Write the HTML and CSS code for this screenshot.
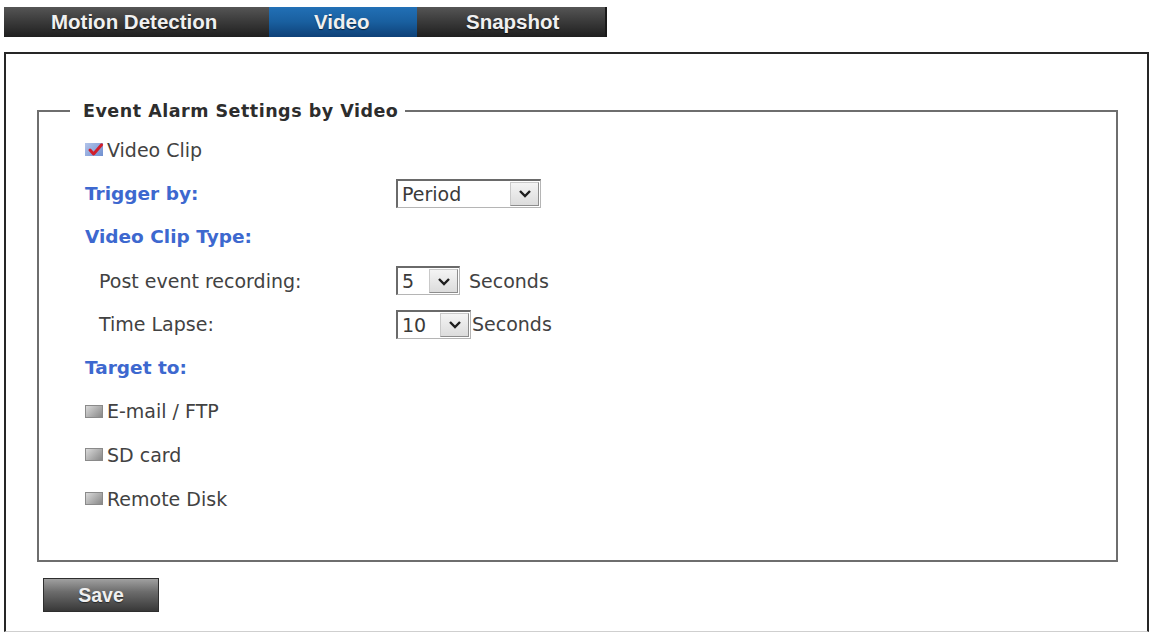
FILE: index.html
```html
<!DOCTYPE html>
<html lang="en">
<head>
<meta charset="utf-8">
<title>Event Alarm Settings</title>
<link rel="stylesheet" href="styles.css">
</head>
<body>
  <nav class="tabs">
    <a class="tab tab-motion">Motion Detection</a>
    <a class="tab tab-video is-active">Video</a>
    <a class="tab tab-snapshot">Snapshot</a>
  </nav>

  <main class="panel">
    <fieldset class="group">
      <legend class="group-title">Event Alarm Settings by Video</legend>

      <div class="row">
        <label class="check"><span class="box box-on"><svg viewBox="0 0 18 13" width="18" height="13"><path d="M5 7 L8.6 11 L16.6 1.8" fill="none" stroke="#d11f2c" stroke-width="3" stroke-linecap="round" stroke-linejoin="round"/></svg></span>Video Clip</label>
      </div>

      <div class="row">
        <span class="label label-blue">Trigger by:</span>
        <span class="select select-wide"><span class="select-value">Period</span><span class="select-btn"><svg viewBox="0 0 14 9" width="14" height="9"><path d="M2 2 L7 7 L12 2" fill="none" stroke="#1e1e1e" stroke-width="2.4"/></svg></span></span>
      </div>

      <div class="row">
        <span class="label label-blue">Video Clip Type:</span>
      </div>

      <div class="row">
        <span class="label label-sub">Post event recording:</span>
        <span class="select select-short"><span class="select-value">5</span><span class="select-btn"><svg viewBox="0 0 14 9" width="14" height="9"><path d="M2 2 L7 7 L12 2" fill="none" stroke="#1e1e1e" stroke-width="2.4"/></svg></span></span>
        <span class="unit">Seconds</span>
      </div>

      <div class="row">
        <span class="label label-sub">Time Lapse:</span>
        <span class="select select-mid"><span class="select-value">10</span><span class="select-btn"><svg viewBox="0 0 14 9" width="14" height="9"><path d="M2 2 L7 7 L12 2" fill="none" stroke="#1e1e1e" stroke-width="2.4"/></svg></span></span>
        <span class="unit unit-tight">Seconds</span>
      </div>

      <div class="row">
        <span class="label label-blue">Target to:</span>
      </div>

      <div class="row">
        <label class="check"><span class="box box-off"></span>E-mail / FTP</label>
      </div>

      <div class="row">
        <label class="check"><span class="box box-off"></span>SD card</label>
      </div>

      <div class="row">
        <label class="check"><span class="box box-off"></span>Remote Disk</label>
      </div>
    </fieldset>

    <button class="btn-save" type="button">Save</button>
  </main>
</body>
</html>
```

FILE: styles.css
```css
html, body {
  margin: 0;
  padding: 0;
  background: #fff;
}

body {
  font-family: "DejaVu Sans", Verdana, sans-serif;
  color: #424242;
}

/* ---- top tab strip ---- */
.tabs {
  display: flex;
  margin: 7px 0 0 4px;
  width: 603px;
  height: 30px;
}

.tab {
  display: flex;
  align-items: center;
  height: 30px;
  font-family: "Liberation Sans", Arial, sans-serif;
  font-weight: bold;
  font-size: 20.5px;
  color: #f0f0f0;
  text-shadow: 0 1px 1px rgba(0, 0, 0, 0.6);
  background: linear-gradient(#555 0%, #3c3c3c 45%, #1f1f1f 100%);
  box-sizing: border-box;
  cursor: pointer;
}

.tab-motion {
  width: 265px;
  padding-left: 47px;
}

.tab-video {
  width: 148px;
  padding-left: 45px;
}

.tab-snapshot {
  width: 190px;
  padding-left: 49px;
  box-shadow: inset -2px 0 0 #1a1a1a;
}

.tab.is-active {
  background: linear-gradient(#2270b6 0%, #195f9f 50%, #0e4178 100%);
}

/* ---- main panel ---- */
.panel {
  margin: 15px 0 0 4px;
  width: 1145px;
  height: 580px;
  box-sizing: border-box;
  border: 2px solid #262626;
  border-bottom: 1px solid #cfcfcf;
  padding: 46px 0 0 31px;
}

.group {
  margin: 0;
  width: 1081px;
  box-sizing: border-box;
  border: 2px solid #6e6e6e;
  padding: 6px 46px 40px;
}

.group-title {
  margin-left: -15px;
  padding: 0 7px 0 13px;
  font-weight: bold;
  font-size: 17.5px;
  letter-spacing: 0.5px;
  line-height: 22px;
  color: #2d2d2d;
}

.row {
  display: flex;
  align-items: center;
  height: 43.6px;
  font-size: 19px;
}

.label {
  width: 311px;
  flex: none;
}

.label-blue {
  font-weight: bold;
  font-size: 18.5px;
  color: #3d68cf;
}

.label-sub {
  padding-left: 14px;
  box-sizing: border-box;
}

/* ---- checkbox images ---- */
.check {
  display: flex;
  align-items: center;
}

.box {
  display: inline-flex;
  width: 18px;
  height: 13px;
  margin-right: 4px;
  box-sizing: border-box;
}

.box-off {
  border: 1px solid #8a8a8a;
  background: linear-gradient(135deg, #dadada, #888);
}

.box-on {
  background: linear-gradient(135deg, #b3c4ea, #7090d0);
}

.box-on svg {
  display: block;
  overflow: visible;
}

/* ---- drop-down boxes ---- */
.select {
  display: inline-flex;
  align-items: stretch;
  height: 29px;
  box-sizing: border-box;
  border-top: 2px solid #6a6a6a;
  border-left: 2px solid #6a6a6a;
  border-right: 1px solid #b5b5b5;
  border-bottom: 1px solid #b5b5b5;
  background: #fff;
  font-size: 19px;
  color: #3a3a3a;
}

.select-wide { width: 145px; }
.select-short { width: 64px; }
.select-mid { width: 75px; }

.select-value {
  flex: 1;
  display: flex;
  align-items: center;
  padding-left: 4px;
}

.select-btn {
  display: flex;
  align-items: center;
  justify-content: center;
  width: 29px;
  margin: 1px;
  box-sizing: border-box;
  border: 1px solid #8d8d8d;
  border-top-color: #c9c9c9;
  border-left-color: #c9c9c9;
  background: linear-gradient(#f4f4f4, #dcdcdc);
}

.unit {
  margin-left: 9px;
}

.unit-tight {
  margin-left: 1px;
}

/* ---- save button ---- */
.btn-save {
  display: block;
  margin: 16px 0 0 6px;
  width: 116px;
  height: 34px;
  border: 1px solid #2e2e2e;
  background: linear-gradient(#a0a0a0 0%, #6c6c6c 40%, #383838 100%);
  font-family: "Liberation Sans", Arial, sans-serif;
  font-weight: bold;
  font-size: 19.5px;
  color: #f0f0f0;
  text-shadow: 0 1px 1px rgba(0, 0, 0, 0.5);
  padding: 0;
  cursor: pointer;
}
```
